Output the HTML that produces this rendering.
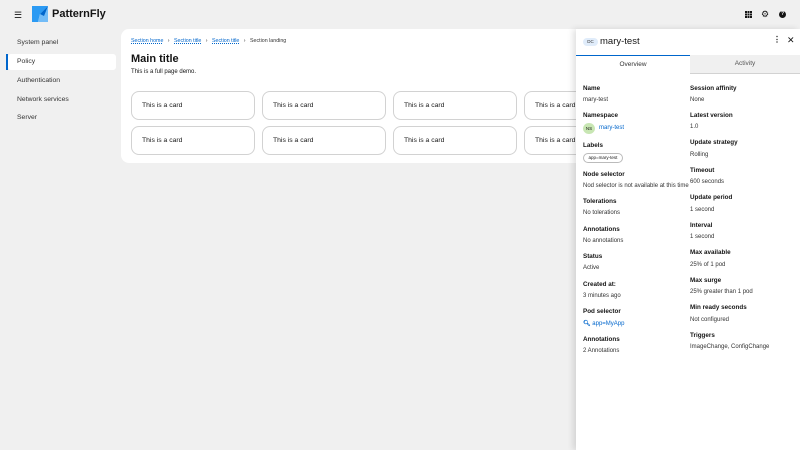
<!DOCTYPE html>
<html><head><style>
*{box-sizing:border-box;margin:0;padding:0}
body{width:800px;height:450px;background:#f0f0f0;font-family:"Liberation Sans",sans-serif;position:relative;overflow:hidden;color:#151515}
.abs{position:absolute}
.nav{font-size:6.8px;color:#333;left:17px}
.card{position:absolute;width:124px;height:29px;border:1px solid #d2d2d2;border-radius:8px;background:#fff;font-size:6.8px;padding:10px 0 0 10px}
.bc{font-size:5.3px;color:#0066cc;text-decoration:underline dotted}
.lbl{position:absolute;font-size:6.3px;font-weight:bold}
.val{position:absolute;font-size:6px;color:#333}
</style></head><body>
<div class="abs" style="left:14px;top:10px;font-size:9px">☰</div>
<svg class="abs" style="left:32px;top:6px" width="16" height="16" viewBox="0 0 16 16"><path d="M0 0H16L8 8 6 16H0Z" fill="#2b9af3"/><path d="M16 0L8 8 6 16H16Z" fill="#73bcf7"/><path d="M8 8L16 0 12 10Z" fill="#06c"/></svg>
<div class="abs" style="left:52px;top:8px;font-size:11px;font-weight:bold">PatternFly</div>
<svg class="abs" style="left:745px;top:11px" width="7" height="7"><g fill="#151515"><rect x="0" y="0" width="2" height="2"/><rect x="2.5" y="0" width="2" height="2"/><rect x="5" y="0" width="2" height="2"/><rect x="0" y="2.5" width="2" height="2"/><rect x="2.5" y="2.5" width="2" height="2"/><rect x="5" y="2.5" width="2" height="2"/><rect x="0" y="5" width="2" height="2"/><rect x="2.5" y="5" width="2" height="2"/><rect x="5" y="5" width="2" height="2"/></g></svg>
<div class="abs" style="left:761px;top:9px;font-size:9px">⚙</div>
<div class="abs" style="left:779px;top:11px;width:7px;height:7px;border-radius:50%;background:#151515;color:#fff;font-size:5px;text-align:center;line-height:7px;font-weight:bold">?</div>

<div class="abs nav" style="top:39px">System panel</div>
<div class="abs" style="left:8px;top:54px;width:108px;height:16px;background:#fff;border-radius:3px"></div>
<div class="abs" style="left:6px;top:54px;width:1.5px;height:16px;background:#06c"></div>
<div class="abs nav" style="top:58px">Policy</div>
<div class="abs nav" style="top:77px">Authentication</div>
<div class="abs nav" style="top:96px">Network services</div>
<div class="abs nav" style="top:114px">Server</div>

<div class="abs" style="left:121px;top:29px;width:470px;height:134px;background:#fff;border-radius:8px"></div>
<div class="abs" style="left:131px;top:38px;font-size:5.3px;color:#333"><span class="bc">Section home</span> &nbsp;&nbsp;›&nbsp;&nbsp; <span class="bc">Section title</span> &nbsp;&nbsp;›&nbsp;&nbsp; <span class="bc">Section title</span> &nbsp;&nbsp;›&nbsp;&nbsp; Section landing</div>
<div class="abs" style="left:131px;top:53px;font-size:11px;font-weight:bold">Main title</div>
<div class="abs" style="left:131px;top:69px;font-size:6px">This is a full page demo.</div>
<div class="card" style="left:131px;top:91px">This is a card</div>
<div class="card" style="left:262px;top:91px">This is a card</div>
<div class="card" style="left:393px;top:91px">This is a card</div>
<div class="card" style="left:524px;top:91px">This is a card</div>
<div class="card" style="left:131px;top:126px">This is a card</div>
<div class="card" style="left:262px;top:126px">This is a card</div>
<div class="card" style="left:393px;top:126px">This is a card</div>
<div class="card" style="left:524px;top:126px">This is a card</div>

<div class="abs" style="left:576px;top:29px;width:224px;height:421px;background:#fff;box-shadow:-3px 0 6px rgba(0,0,0,.12)"></div>
<div class="abs" style="left:583px;top:38px;width:15px;height:8px;border-radius:4px;background:#e0ecfa;font-size:4.5px;color:#333;text-align:center;line-height:8px">DC</div>
<div class="abs" style="left:600px;top:36px;font-size:9.5px">mary-test</div>
<div class="abs" style="left:773px;top:35px;font-size:8px;font-weight:bold">⋮</div>
<div class="abs" style="left:787px;top:35px;font-size:9px">✕</div>
<div class="abs" style="left:576px;top:55px;width:114px;height:19px;border-top:1.5px solid #06c;font-size:6.5px;text-align:center;line-height:17px;color:#333">Overview</div>
<div class="abs" style="left:690px;top:55px;width:110px;height:19px;background:#f0f0f0;border-bottom:1px solid #d2d2d2;font-size:6.5px;text-align:center;line-height:18px;color:#555">Activity</div>

<div class="lbl" style="left:583px;top:85px">Name</div><div class="val" style="left:583px;top:97px">mary-test</div>
<div class="lbl" style="left:583px;top:112px">Namespace</div>
<div class="abs" style="left:583px;top:123px;width:12px;height:11px;border-radius:50%;background:#c8e6b3;font-size:4.5px;text-align:center;line-height:11px">NS</div>
<div class="val" style="left:599px;top:125px;color:#06c">mary-test</div>
<div class="lbl" style="left:583px;top:142px">Labels</div>
<div class="abs" style="left:583px;top:153px;width:40px;height:10px;border:1px solid #bbb;border-radius:5px;font-size:4.5px;text-align:center;line-height:8px">app=mary-test</div>
<div class="lbl" style="left:583px;top:171px">Node selector</div><div class="val" style="left:583px;top:183px">Nod selector is not available at this time</div>
<div class="lbl" style="left:583px;top:198px">Tolerations</div><div class="val" style="left:583px;top:210px">No tolerations</div>
<div class="lbl" style="left:583px;top:226px">Annotations</div><div class="val" style="left:583px;top:238px">No annotations</div>
<div class="lbl" style="left:583px;top:253px">Status</div><div class="val" style="left:583px;top:265px">Active</div>
<div class="lbl" style="left:583px;top:281px">Created at:</div><div class="val" style="left:583px;top:293px">3 minutes ago</div>
<div class="lbl" style="left:583px;top:308px">Pod selector</div><div class="val" style="left:583px;top:320px;color:#06c"><b>🔍︎</b> app=MyApp</div>
<div class="lbl" style="left:583px;top:336px">Annotations</div><div class="val" style="left:583px;top:348px">2 Annotations</div>

<div class="lbl" style="left:690px;top:85px">Session affinity</div><div class="val" style="left:690px;top:97px">None</div>
<div class="lbl" style="left:690px;top:112px">Latest version</div><div class="val" style="left:690px;top:124px">1.0</div>
<div class="lbl" style="left:690px;top:139px">Update strategy</div><div class="val" style="left:690px;top:152px">Rolling</div>
<div class="lbl" style="left:690px;top:167px">Timeout</div><div class="val" style="left:690px;top:179px">600 seconds</div>
<div class="lbl" style="left:690px;top:194px">Update period</div><div class="val" style="left:690px;top:207px">1 second</div>
<div class="lbl" style="left:690px;top:222px">Interval</div><div class="val" style="left:690px;top:234px">1 second</div>
<div class="lbl" style="left:690px;top:249px">Max available</div><div class="val" style="left:690px;top:262px">25% of 1 pod</div>
<div class="lbl" style="left:690px;top:277px">Max surge</div><div class="val" style="left:690px;top:289px">25% greater than 1 pod</div>
<div class="lbl" style="left:690px;top:304px">Min ready seconds</div><div class="val" style="left:690px;top:317px">Not configured</div>
<div class="lbl" style="left:690px;top:332px">Triggers</div><div class="val" style="left:690px;top:344px">ImageChange, ConfigChange</div>
</body></html>
